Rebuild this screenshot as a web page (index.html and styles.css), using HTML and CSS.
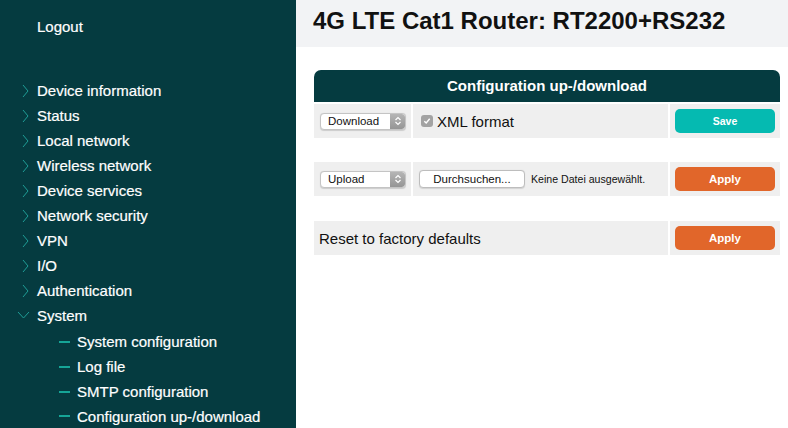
FILE: index.html
```html
<!DOCTYPE html>
<html lang="en">
<head>
<meta charset="utf-8">
<title>4G LTE Cat1 Router: RT2200+RS232</title>
<link rel="stylesheet" href="styles.css">
</head>
<body>
<div class="app">
  <aside class="sidebar">
    <div class="logout">Logout</div>
    <ul class="menu">
      <li class="item"><svg class="chev" width="7" height="14" viewBox="0 0 7 14"><path d="M1 1 L6 7 L1 13" fill="none" stroke="#1f9e97" stroke-width="1"/></svg><span>Device information</span></li>
      <li class="item"><svg class="chev" width="7" height="14" viewBox="0 0 7 14"><path d="M1 1 L6 7 L1 13" fill="none" stroke="#1f9e97" stroke-width="1"/></svg><span>Status</span></li>
      <li class="item"><svg class="chev" width="7" height="14" viewBox="0 0 7 14"><path d="M1 1 L6 7 L1 13" fill="none" stroke="#1f9e97" stroke-width="1"/></svg><span>Local network</span></li>
      <li class="item"><svg class="chev" width="7" height="14" viewBox="0 0 7 14"><path d="M1 1 L6 7 L1 13" fill="none" stroke="#1f9e97" stroke-width="1"/></svg><span>Wireless network</span></li>
      <li class="item"><svg class="chev" width="7" height="14" viewBox="0 0 7 14"><path d="M1 1 L6 7 L1 13" fill="none" stroke="#1f9e97" stroke-width="1"/></svg><span>Device services</span></li>
      <li class="item"><svg class="chev" width="7" height="14" viewBox="0 0 7 14"><path d="M1 1 L6 7 L1 13" fill="none" stroke="#1f9e97" stroke-width="1"/></svg><span>Network security</span></li>
      <li class="item"><svg class="chev" width="7" height="14" viewBox="0 0 7 14"><path d="M1 1 L6 7 L1 13" fill="none" stroke="#1f9e97" stroke-width="1"/></svg><span>VPN</span></li>
      <li class="item"><svg class="chev" width="7" height="14" viewBox="0 0 7 14"><path d="M1 1 L6 7 L1 13" fill="none" stroke="#1f9e97" stroke-width="1"/></svg><span>I/O</span></li>
      <li class="item"><svg class="chev" width="7" height="14" viewBox="0 0 7 14"><path d="M1 1 L6 7 L1 13" fill="none" stroke="#1f9e97" stroke-width="1"/></svg><span>Authentication</span></li>
      <li class="item open"><svg class="chev-down" width="13" height="8" viewBox="0 0 13 8"><path d="M1 1 L6.5 7 L12 1" fill="none" stroke="#1f9e97" stroke-width="1"/></svg><span>System</span></li>
      <li>
        <ul class="submenu">
          <li class="subitem"><span class="dash"></span><span>System configuration</span></li>
          <li class="subitem"><span class="dash"></span><span>Log file</span></li>
          <li class="subitem"><span class="dash"></span><span>SMTP configuration</span></li>
          <li class="subitem"><span class="dash"></span><span>Configuration up-/download</span></li>
        </ul>
      </li>
    </ul>
  </aside>
  <main class="main">
    <header class="topbar"><h1 class="title">4G LTE Cat1 Router: RT2200+RS232</h1></header>
    <section class="panel">
      <div class="panel-head">Configuration up-/download</div>
      <div class="row first">
        <div class="cell sel-cell">
          <div class="select"><span class="sel-text">Download</span><span class="sel-arrow"><svg width="8" height="10" viewBox="0 0 8 10"><path d="M1.5 4 L4 1.5 L6.5 4 M1.5 6 L4 8.5 L6.5 6" fill="none" stroke="#fff" stroke-width="1.2"/></svg></span></div>
        </div>
        <div class="cell opt-cell">
          <span class="checkbox"><svg width="8" height="8" viewBox="0 0 8 8"><path d="M1.3 4.2 L3.2 6 L6.7 1.8" fill="none" stroke="#fff" stroke-width="1.4"/></svg></span>
          <span class="opt-label">XML format</span>
        </div>
        <div class="cell btn-cell"><button class="btn save">Save</button></div>
      </div>
      <div class="row">
        <div class="cell sel-cell">
          <div class="select"><span class="sel-text">Upload</span><span class="sel-arrow"><svg width="8" height="10" viewBox="0 0 8 10"><path d="M1.5 4 L4 1.5 L6.5 4 M1.5 6 L4 8.5 L6.5 6" fill="none" stroke="#fff" stroke-width="1.2"/></svg></span></div>
        </div>
        <div class="cell file-cell">
          <span class="file-btn">Durchsuchen...</span>
          <span class="file-name">Keine Datei ausgewählt.</span>
        </div>
        <div class="cell btn-cell"><button class="btn apply">Apply</button></div>
      </div>
      <div class="row">
        <div class="cell reset-cell">Reset to factory defaults</div>
        <div class="cell btn-cell"><button class="btn apply">Apply</button></div>
      </div>
    </section>
  </main>
</div>
</body>
</html>
```
FILE: styles.css
```css
* { box-sizing: border-box; }
html, body { margin: 0; padding: 0; }
body {
  font-family: "Liberation Sans", Arial, Helvetica, sans-serif;
  background: #ffffff;
  color: #111;
}
.app {
  display: flex;
  min-height: 100vh;
}
.sidebar {
  width: 296px;
  flex: 0 0 296px;
  background: #053b40;
  color: #ffffff;
  font-size: 15px;
  -webkit-text-stroke: 0.2px #ffffff;
}
.logout {
  padding: 14px 0 0 37px;
  line-height: 25px;
}
.menu {
  list-style: none;
  margin: 39px 0 0 0;
  padding: 0;
}
.item {
  display: flex;
  align-items: center;
  height: 25px;
  padding-left: 22px;
}
.item .chev {
  flex: 0 0 7px;
  margin-right: 8px;
}
.item.open {
  padding-left: 17px;
}
.item .chev-down {
  flex: 0 0 13px;
  margin-right: 7px;
  margin-top: -2px;
}
.submenu {
  list-style: none;
  margin: 1px 0 0 0;
  padding: 0;
}
.subitem {
  display: flex;
  align-items: center;
  height: 25px;
  padding-left: 59px;
}
.subitem:last-child { height: 24px; }
.subitem .dash {
  width: 11px;
  height: 2px;
  background: #16a597;
  margin-right: 7px;
}
.main {
  flex: 1;
}
.topbar {
  height: 47px;
  background: #f2f3f5;
  padding: 7px 0 0 17px;
}
.title {
  margin: 0;
  font-size: 24px;
  line-height: 28px;
  font-weight: bold;
  color: #111;
}
.panel {
  width: 466px;
  margin: 23px 0 0 18px;
}
.panel-head {
  height: 32px;
  line-height: 32px;
  background: #053b40;
  color: #fff;
  border-radius: 7px 7px 0 0;
  text-align: center;
  font-weight: bold;
  font-size: 15px;
}
.row {
  display: flex;
  gap: 2px;
  height: 34px;
  margin-top: 24px;
}
.row.first {
  margin-top: 2px;
}
.row:last-child { margin-top: 25px; }
.cell {
  background: #efefef;
  display: flex;
  align-items: center;
  height: 34px;
}
.sel-cell { width: 97px; padding-left: 6px; }
.opt-cell, .file-cell { width: 255px; }
.btn-cell { width: 110px; padding-left: 5px; }
.reset-cell { width: 354px; padding-left: 5px; font-size: 15px; }
.select {
  width: 86px;
  height: 17px;
  background: #fff;
  border: 1px solid #c4c4c4;
  border-radius: 4px;
  display: flex;
  align-items: center;
  justify-content: space-between;
  overflow: hidden;
  box-shadow: 0 0.5px 1px rgba(0,0,0,0.15);
}
.sel-text {
  font-size: 11.5px;
  padding-left: 7px;
  color: #111;
}
.sel-arrow {
  width: 15px;
  height: 15px;
  background: linear-gradient(#b5b5b5, #959595);
  display: flex;
  align-items: center;
  justify-content: center;
  border-radius: 0 3px 3px 0;
}
.opt-cell { padding-left: 8px; }
.checkbox {
  width: 12px;
  height: 12px;
  border-radius: 3px;
  background: #a3a3a3;
  display: flex;
  align-items: center;
  justify-content: center;
  margin-right: 4px;
}
.opt-label { font-size: 15px; }
.file-cell { padding-left: 6px; }
.file-btn {
  width: 106px;
  height: 18px;
  border: 1px solid #bdbdbd;
  border-radius: 4px;
  background: #fff;
  font-size: 11.5px;
  display: flex;
  align-items: center;
  justify-content: center;
  box-shadow: 0 0.5px 1px rgba(0,0,0,0.12);
}
.file-name {
  font-size: 10.6px;
  margin-left: 6px;
  color: #111;
}
.btn {
  width: 100px;
  height: 24px;
  border: none;
  border-radius: 5px;
  color: #fff;
  font-family: "Liberation Sans", Arial, sans-serif;
  font-weight: bold;
  padding: 0;
}
.btn.save { background: #05bab1; font-size: 10.5px; }
.btn.apply { background: #e1662a; font-size: 11.5px; }
```
